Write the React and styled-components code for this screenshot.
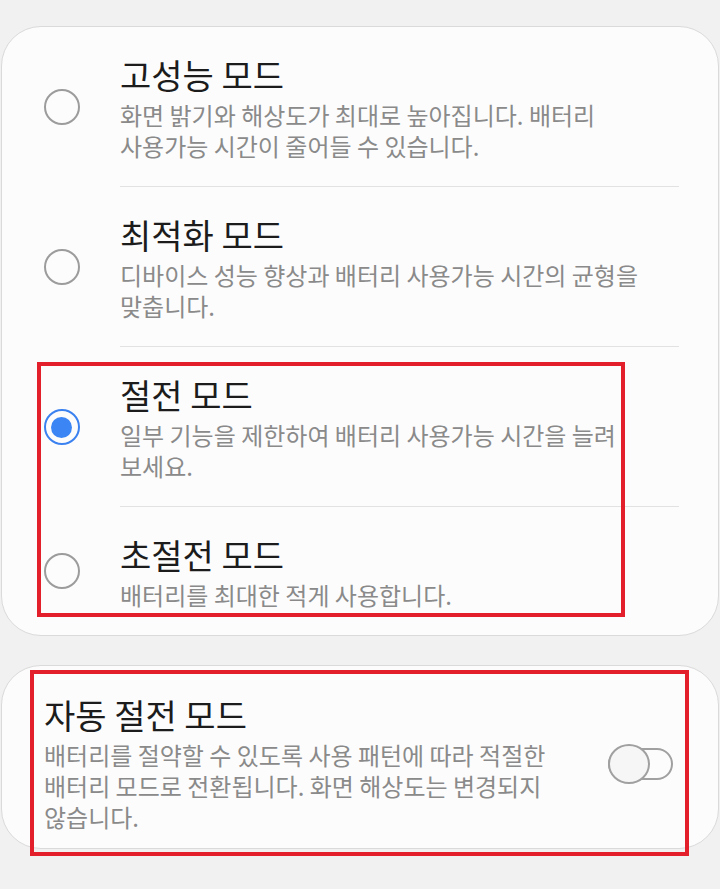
import React from "react";
import styled, { createGlobalStyle, css } from "styled-components";

const GlobalStyle = createGlobalStyle`
  html, body {
    margin: 0;
    padding: 0;
    background: #f1f1f1;
  }
  body {
    font-family: "Noto Sans CJK KR", "Noto Sans", sans-serif;
    -webkit-font-smoothing: antialiased;
  }
  * { box-sizing: border-box; }
`;

const Page = styled.div`
  width: 720px;
  min-height: 889px;
  padding: 26px 1px 0 1px;
  display: flex;
  flex-direction: column;
  gap: 29px;
`;

const Card = styled.section`
  position: relative;
  background: #fcfcfc;
  border: 1px solid #dadada;
  border-radius: 40px;
`;

/* red outline drawn over a group of settings */
const Outline = styled.div`
  position: absolute;
  pointer-events: none;
  border: 4px solid #e21f2b;
  top: ${(p) => p.$top}px;
  left: ${(p) => p.$left}px;
  width: ${(p) => p.$width}px;
  height: ${(p) => p.$height}px;
`;

const Group = styled.div`
  position: relative;
`;

const Row = styled.div`
  display: grid;
  grid-template-columns: 118px 1fr;
  padding-right: 39px;
`;

const RadioCell = styled.div`
  display: flex;
  align-items: center;
  justify-content: center;
  padding-left: 1px;
`;

const Radio = styled.span`
  width: 36px;
  height: 36px;
  border-radius: 50%;
  border: 2px solid #9c9c9c;
  display: flex;
  align-items: center;
  justify-content: center;
  ${(p) =>
    p.$checked &&
    css`
      border-color: #3b82f0;
      &::after {
        content: "";
        width: 21px;
        height: 21px;
        border-radius: 50%;
        background: #3b86f4;
      }
    `}
`;

const Body = styled.div`
  padding: 28px 8px ${(p) => (p.$last ? 25 : 25)}px 0;
  border-bottom: ${(p) => (p.$last ? "none" : "1px solid #e2e2e2")};
`;

const Title = styled.div`
  font-size: 34px;
  line-height: 40px;
  color: #1c1c1c;
`;

const Desc = styled.div`
  margin-top: 4px;
  font-size: 24px;
  line-height: 31px;
  color: #8a8a8a;
  word-break: keep-all;
`;

const SwitchRow = styled.div`
  display: flex;
  align-items: center;
  padding: 29px 45px 16px 42px;
  gap: 40px;
`;

const SwitchText = styled.div`
  flex: 1;
`;

const Toggle = styled.span`
  position: relative;
  flex: none;
  width: 65px;
  height: 36px;
  display: flex;
  align-items: center;

  &::before {
    content: "";
    position: absolute;
    left: 0;
    right: 0;
    top: 2px;
    bottom: 2px;
    border: 2px solid #a0a0a0;
    border-radius: 16px;
    background: #fcfcfc;
  }
  &::after {
    content: "";
    position: relative;
    width: 38px;
    height: 36px;
    border-radius: 50%;
    border: 2px solid #a0a0a0;
    background: #f6f6f6;
  }
`;

const modes = [
  {
    title: "고성능 모드",
    desc: "화면 밝기와 해상도가 최대로 높아집니다. 배터리 사용가능 시간이 줄어들 수 있습니다.",
  },
  {
    title: "최적화 모드",
    desc: "디바이스 성능 향상과 배터리 사용가능 시간의 균형을 맞춥니다.",
  },
  {
    title: "절전 모드",
    desc: "일부 기능을 제한하여 배터리 사용가능 시간을 늘려 보세요.",
    checked: true,
  },
  {
    title: "초절전 모드",
    desc: "배터리를 최대한 적게 사용합니다.",
  },
];

function ModeRow({ mode, last }) {
  return (
    <Row>
      <RadioCell>
        <Radio $checked={mode.checked} />
      </RadioCell>
      <Body $last={last}>
        <Title>{mode.title}</Title>
        <Desc>{mode.desc}</Desc>
      </Body>
    </Row>
  );
}

export default function App() {
  return (
    <>
      <GlobalStyle />
      <Page>
        <Card>
          <ModeRow mode={modes[0]} />
          <ModeRow mode={modes[1]} />
          <Group>
            <ModeRow mode={modes[2]} />
            <ModeRow mode={modes[3]} last />
            <Outline $top={15} $left={35} $width={588} $height={255} />
          </Group>
        </Card>
        <Card>
          <SwitchRow>
            <SwitchText>
              <Title>자동 절전 모드</Title>
              <Desc>
                배터리를 절약할 수 있도록 사용 패턴에 따라 적절한 배터리 모드로 전환됩니다. 화면 해상도는 변경되지 않습니다.
              </Desc>
            </SwitchText>
            <Toggle />
          </SwitchRow>
          <Outline $top={4} $left={28} $width={659} $height={186} />
        </Card>
      </Page>
    </>
  );
}
